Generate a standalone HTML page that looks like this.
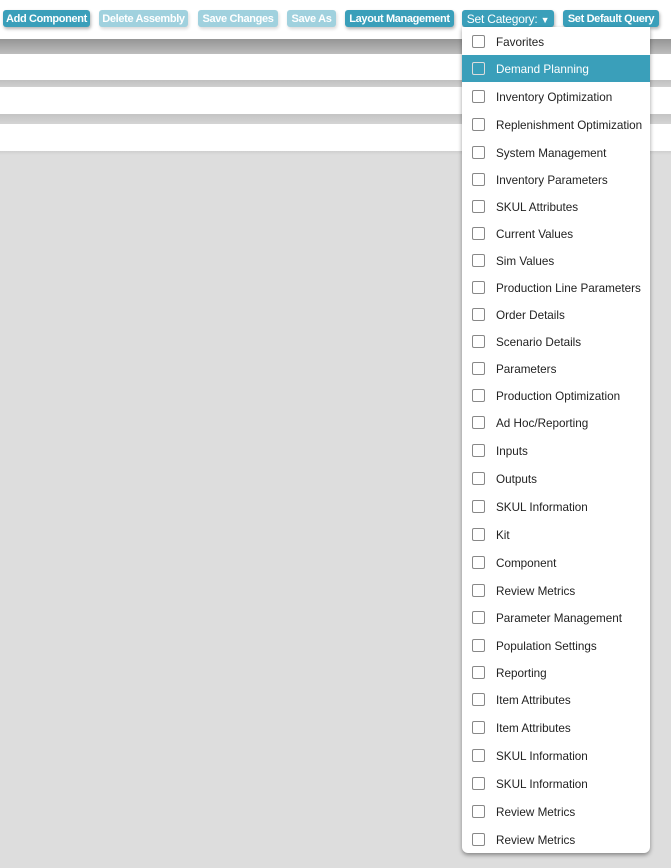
<!DOCTYPE html>
<html><head><style>
*{margin:0;padding:0;box-sizing:border-box}
body{width:671px;height:868px;background:#dddddd;font-family:"Liberation Sans",sans-serif;position:relative;overflow:hidden}
.top{position:absolute;left:0;top:0;width:671px;height:39px;background:#fff}
.band{position:absolute;left:0;width:671px}
.btn{position:absolute;top:10px;height:17px;border-radius:3px;color:#fff;font-size:11px;font-weight:bold;letter-spacing:-0.35px;line-height:18px;text-align:center;background:#3a9fba;box-shadow:1px 2px 3px rgba(0,0,0,.3);white-space:nowrap}
.dis{background:#a0d1de;box-shadow:1px 2px 3px rgba(0,0,0,.15)}
.dd{position:absolute;left:462px;top:27px;width:188px;height:826px;background:#fff;border-radius:0 0 6px 6px;box-shadow:0 2px 4px rgba(0,0,0,.4)}
.it{position:absolute;left:0;width:188px;height:27px;font-size:11.7px;color:#222;line-height:29px}
.it span{position:absolute;left:34px;top:0}
.it i{position:absolute;left:10px;top:7px;width:13px;height:13px;border:1px solid #888;border-radius:2px;background:#fff}
.hl{background:#3a9fba;color:#fff}
.hl i{background:#3a9fba;border-color:#ddd}
</style></head><body>
<div class="top"></div>
<div class="band" style="top:39px;height:15px;background:linear-gradient(#959595,#bdbdbd)"></div>
<div class="band" style="top:54px;height:26px;background:#fff"></div>
<div class="band" style="top:80px;height:7px;background:linear-gradient(#c0c0c0,#d0d0d0)"></div>
<div class="band" style="top:87px;height:27px;background:#fff"></div>
<div class="band" style="top:114px;height:10px;background:linear-gradient(#c4c4c4,#d4d4d4)"></div>
<div class="band" style="top:124px;height:27px;background:#fff"></div>
<div class="band" style="top:151px;height:4px;background:linear-gradient(#cfcfcf,#dddddd)"></div>

<div class="btn" style="left:3px;width:87px">Add Component</div>
<div class="btn dis" style="left:99px;width:89px">Delete Assembly</div>
<div class="btn dis" style="left:198px;width:80px">Save Changes</div>
<div class="btn dis" style="left:287px;width:49px">Save As</div>
<div class="btn" style="left:345px;width:109px">Layout Management</div>
<div class="btn" style="left:462px;width:92px;font-weight:normal;font-size:12px;letter-spacing:-0.2px">Set Category: <span style="font-size:9px">&#9660;</span></div>
<div class="btn" style="left:563px;width:96px">Set Default Query</div>

<div class="dd">
<div class="it" style="top:1px"><i></i><span>Favorites</span></div>
<div class="it hl" style="top:28px"><i></i><span>Demand Planning</span></div>
<div class="it" style="top:56px"><i></i><span>Inventory Optimization</span></div>
<div class="it" style="top:84px"><i></i><span>Replenishment Optimization</span></div>
<div class="it" style="top:112px"><i></i><span>System Management</span></div>
<div class="it" style="top:139px"><i></i><span>Inventory Parameters</span></div>
<div class="it" style="top:166px"><i></i><span>SKUL Attributes</span></div>
<div class="it" style="top:193px"><i></i><span>Current Values</span></div>
<div class="it" style="top:220px"><i></i><span>Sim Values</span></div>
<div class="it" style="top:247px"><i></i><span>Production Line Parameters</span></div>
<div class="it" style="top:274px"><i></i><span>Order Details</span></div>
<div class="it" style="top:301px"><i></i><span>Scenario Details</span></div>
<div class="it" style="top:328px"><i></i><span>Parameters</span></div>
<div class="it" style="top:355px"><i></i><span>Production Optimization</span></div>
<div class="it" style="top:382px"><i></i><span>Ad Hoc/Reporting</span></div>
<div class="it" style="top:410px"><i></i><span>Inputs</span></div>
<div class="it" style="top:438px"><i></i><span>Outputs</span></div>
<div class="it" style="top:466px"><i></i><span>SKUL Information</span></div>
<div class="it" style="top:494px"><i></i><span>Kit</span></div>
<div class="it" style="top:522px"><i></i><span>Component</span></div>
<div class="it" style="top:550px"><i></i><span>Review Metrics</span></div>
<div class="it" style="top:577px"><i></i><span>Parameter Management</span></div>
<div class="it" style="top:605px"><i></i><span>Population Settings</span></div>
<div class="it" style="top:632px"><i></i><span>Reporting</span></div>
<div class="it" style="top:659px"><i></i><span>Item Attributes</span></div>
<div class="it" style="top:687px"><i></i><span>Item Attributes</span></div>
<div class="it" style="top:715px"><i></i><span>SKUL Information</span></div>
<div class="it" style="top:743px"><i></i><span>SKUL Information</span></div>
<div class="it" style="top:771px"><i></i><span>Review Metrics</span></div>
<div class="it" style="top:799px"><i></i><span>Review Metrics</span></div>
</div>
</body></html>
